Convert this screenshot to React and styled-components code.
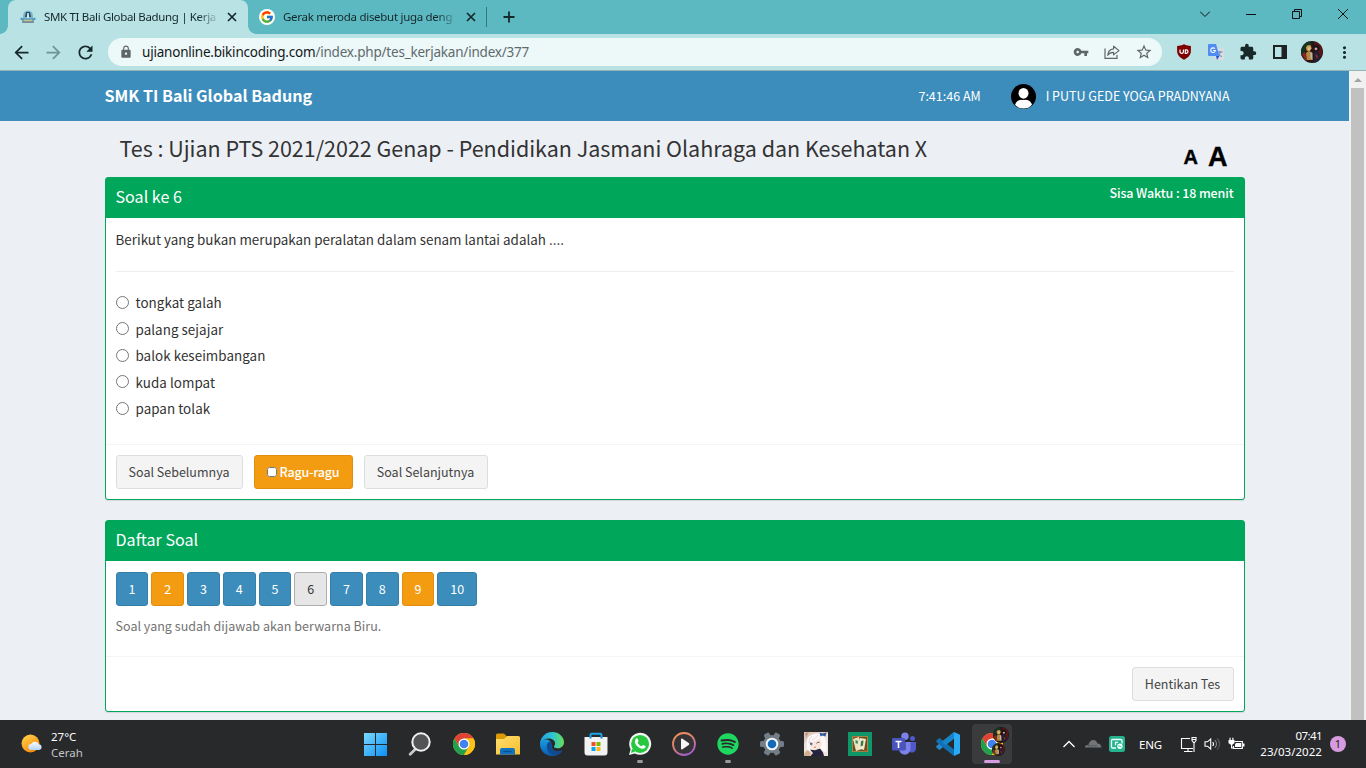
import React from 'react';
import styled, { createGlobalStyle, css } from 'styled-components';
import { MdVpnKey, MdStarBorder, MdExtension, MdMoreVert, MdArrowBack, MdArrowForward, MdRefresh, MdLock } from 'react-icons/md';
import { FcGoogle } from 'react-icons/fc';
import { FaSpotify } from 'react-icons/fa';

const ui = '"Noto Sans", "Open Sans", sans-serif';
const page = '"Noto Sans CJK SC", "Open Sans", sans-serif';

const GlobalStyle = createGlobalStyle`
  *, *::before, *::after { box-sizing: border-box; }
  body { margin: 0; overflow: hidden; }
  svg { display: block; flex: none; }
`;

const Screen = styled.div`
  width: 1366px;
  height: 768px;
  display: flex;
  flex-direction: column;
  overflow: hidden;
  font-family: ${ui};
`;

/* ---------- browser chrome ---------- */

const TabStrip = styled.div`
  height: 34px;
  flex: none;
  display: flex;
  align-items: stretch;
  padding-left: 8px;
  background: #5cb8c1;
`;

const Tab = styled.div`
  position: relative;
  width: ${p => p.$w}px;
  display: flex;
  align-items: center;
  padding-left: ${p => p.$pad}px;
  border-radius: 8px 8px 0 0;
  color: #15282b;
  background: ${p => (p.$active ? '#b9e2e5' : 'transparent')};
  ${p => p.$active && css`
    &::before, &::after {
      content: '';
      position: absolute;
      bottom: 0;
      width: 8px;
      height: 8px;
    }
    &::before { left: -8px; background: radial-gradient(circle at 0 0, transparent 7.5px, #b9e2e5 8px); }
    &::after { right: -8px; background: radial-gradient(circle at 100% 0, transparent 7.5px, #b9e2e5 8px); }
  `}
`;

const TabTitle = styled.span`
  width: 176px;
  margin: 0 7px 0 8px;
  white-space: nowrap;
  font-size: 11.5px;
  line-height: 18px;
  letter-spacing: ${p => p.$ls}px;
  mask-image: linear-gradient(90deg, #000 calc(100% - 22px), transparent);
`;

const TabDivider = styled.div`
  width: 1px;
  height: 20px;
  margin: 7px 16px 0 0;
  background: #35797f;
`;

const NewTab = styled.div`
  display: flex;
  align-items: center;
`;

const WindowButtons = styled.div`
  margin-left: auto;
  display: flex;
`;

const WindowButton = styled.div`
  width: 46px;
  height: 28px;
  display: flex;
  align-items: center;
  justify-content: center;
`;

const Toolbar = styled.div`
  height: 37px;
  flex: none;
  display: flex;
  align-items: center;
  padding: 0 6px 0 11px;
  background: #b9e2e5;
  border-bottom: 1px solid #93b5b8;
  color: #17282b;
`;

const NavButtons = styled.div`
  display: flex;
  gap: 11px;
  width: 97px;
`;

const AddressBar = styled.div`
  width: 1054px;
  height: 28px;
  border-radius: 14px;
  background: #edf8f9;
  display: flex;
  align-items: center;
  padding: 0 9px 0 11px;
  color: #5f6668;
`;

const Url = styled.span`
  margin-left: 9px;
  font-size: 13.5px;
  line-height: 20px;
  letter-spacing: -0.21px;
  color: #5f6a6c;
  white-space: nowrap;
  b { font-weight: 400; color: #14191a; }
`;

const AddressActions = styled.div`
  margin-left: auto;
  display: flex;
  align-items: center;
  gap: 15px;
`;

const Extensions = styled.div`
  margin-left: 6px;
  display: flex;
  align-items: center;
`;

const ExtensionSlot = styled.div`
  width: 32px;
  display: flex;
  justify-content: center;
`;

/* ---------- web page ---------- */

const Viewport = styled.div`
  height: 649px;
  flex: none;
  display: flex;
  background: #ecf0f5;
`;

const Document = styled.div`
  width: 1349px;
  font-family: ${page};
  color: #333;
`;

const Scrollbar = styled.div`
  width: 17px;
  background: #f1f1f1;
  display: flex;
  flex-direction: column;
  align-items: center;
`;

const ScrollArrow = styled.div`
  height: 17px;
  display: flex;
  align-items: center;
`;

const ScrollThumb = styled.div`
  width: 13px;
  flex: 1;
  background: #c1c1c1;
`;

const Navbar = styled.header`
  height: 50px;
  padding: 0 119.5px 0 104.5px;
  display: flex;
  align-items: center;
  background: #3c8dbc;
  color: #fff;
  white-space: nowrap;
`;

const Brand = styled.div`
  padding-bottom: 2px;
  font-size: 16.1px;
  font-weight: 700;
  line-height: 24px;
`;

const NavText = styled.span`
  font-size: 12.5px;
  line-height: 20px;
`;

const UserInfo = styled.div`
  margin-left: auto;
  display: flex;
  align-items: center;
  svg { margin: 0 10px 0 30px; }
`;

const Content = styled.main`
  width: 1140px;
  margin-left: 104.5px;
`;

const TitleRow = styled.div`
  height: 56px;
  display: flex;
  align-items: flex-start;
  justify-content: space-between;
  padding: 11px 17px 0 15px;
`;

const Title = styled.h1`
  margin: 0;
  font-size: 21.5px;
  font-weight: 400;
  line-height: 32px;
  letter-spacing: -0.02px;
  white-space: nowrap;
`;

const FontSizes = styled.div`
  display: flex;
  align-items: center;
  gap: 10px;
  padding-top: 10px;
  font-family: "Liberation Sans", sans-serif;
  font-weight: 700;
  color: #000;
  line-height: 30px;
`;

const SizeLetter = styled.span`
  font-size: ${p => p.$size}px;
  -webkit-text-stroke: 0.4px #000;
`;

const Box = styled.section`
  height: ${p => p.$h}px;
  margin-bottom: 20px;
  display: flex;
  flex-direction: column;
  background: #fff;
  border: 1px solid #00a65a;
  border-radius: 3px;
  box-shadow: 0 1px 1px rgba(0, 0, 0, 0.1);
`;

const BoxHeader = styled.div`
  height: 40px;
  flex: none;
  padding: 7px 10px;
  display: flex;
  justify-content: space-between;
  background: #00a65a;
  color: #fff;
`;

const BoxTitle = styled.h3`
  margin: 0;
  font-size: 16.1px;
  font-weight: 400;
  line-height: 22px;
`;

const TimeLeft = styled.div`
  font-size: 12.5px;
  font-weight: 500;
  line-height: 15px;
  letter-spacing: -0.12px;
`;

const BoxBody = styled.div`
  flex: 1;
  padding: 10px;
`;

const BoxFooter = styled.div`
  height: 55px;
  padding: 10px;
  border-top: 1px solid #f4f4f4;
  display: flex;
  gap: 11px;
  justify-content: ${p => (p.$end ? 'flex-end' : 'flex-start')};
`;

const Question = styled.p`
  margin: 0;
  padding-bottom: 21px;
  border-bottom: 1px solid #eee;
  font-size: 13.4px;
  line-height: 22px;
  letter-spacing: 0.01px;
`;

const Answers = styled.div`
  padding-top: 17px;
`;

const Answer = styled.label`
  height: 26.5px;
  display: flex;
  align-items: center;
  font-size: 13.4px;
  line-height: 22px;
  letter-spacing: 0.05px;
  input { width: 13px; height: 13px; margin: 0 7px 0 0; }
`;

const kinds = {
  plain: css`background: #f4f4f4; border-color: #ddd; color: #444;`,
  blue: css`background: #3c8dbc; border-color: #367fa9; color: #fff;`,
  orange: css`background: #f39c12; border-color: #e08e0b; color: #fff;`,
  current: css`background: #e6e6e6; border-color: #adadad; color: #333;`,
};

const Button = styled.button`
  width: ${p => p.$w}px;
  height: 34px;
  padding: 0;
  display: flex;
  align-items: center;
  justify-content: center;
  border: 1px solid;
  border-radius: 3px;
  font-family: ${page};
  font-size: 12.5px;
  font-weight: ${p => p.$weight || 400};
  line-height: 20px;
  letter-spacing: ${p => p.$ls || 0}px;
  white-space: nowrap;
  ${p => kinds[p.$kind]}
  input { width: 10px; height: 10px; margin: 0 3px 0 0; }
`;

const QuestionNumbers = styled.div`
  display: flex;
  gap: 3px;
  padding-top: 1px;
`;

const Hint = styled.p`
  margin: 10px 0 0;
  font-size: 12.5px;
  line-height: 20px;
  letter-spacing: 0.03px;
  color: #737373;
`;

/* ---------- taskbar ---------- */

const Taskbar = styled.footer`
  height: 48px;
  flex: none;
  display: flex;
  align-items: center;
  background: #28292b;
  color: #fff;
  font-size: 12px;
  line-height: 16px;
`;

const Weather = styled.div`
  width: 354px;
  display: flex;
  align-items: center;
  padding-left: 20px;
  gap: 8px;
`;

const WeatherText = styled.div`
  font-size: 11.5px;
  padding-top: 1px;
  span { display: block; }
  span + span { color: #c4c4c4; }
`;

const TaskButton = styled.div`
  position: relative;
  width: 40px;
  height: 40px;
  margin: 0 2px;
  display: flex;
  align-items: center;
  justify-content: center;
  border-radius: 4px;
  background: ${p => (p.$state === 'active' ? '#3a3b3d' : 'transparent')};
  ${p => p.$state && css`
    &::after {
      content: '';
      position: absolute;
      bottom: 1px;
      left: 50%;
      width: ${p.$state === 'active' ? 16 : 6}px;
      height: 3px;
      border-radius: 2px;
      transform: translateX(-50%);
      background: ${p.$state === 'active' ? '#d99be0' : '#9b9b9c'};
    }
  `}
`;

const Tray = styled.div`
  margin-left: auto;
  display: flex;
  align-items: center;
  padding-right: 20px;
`;

const TrayIcon = styled.div`
  margin-right: ${p => p.$gap}px;
`;

const Language = styled.span`
  margin: 1px 18px 0 0;
  font-size: 11.5px;
  letter-spacing: -0.15px;
`;

const Clock = styled.div`
  width: 64px;
  margin-left: 13px;
  text-align: right;
  font-size: 11.5px;
  white-space: nowrap;
  span { display: block; letter-spacing: -0.6px; }
  span + span { letter-spacing: 0.05px; }
`;

const Notice = styled.div`
  width: 16px;
  height: 16px;
  margin-left: 8px;
  border-radius: 50%;
  background: #d99be0;
  color: #222;
  font-size: 11px;
  text-align: center;
`;

/* ---------- drawings ---------- */

const CloseGlyph = () => (
  <svg width="10" height="10" viewBox="0 0 10 10" stroke="#15282b" strokeWidth="1.7">
    <path d="M1 1l8 8M9 1l-8 8" />
  </svg>
);

const SchoolLogo = () => (
  <svg width="16" height="16" viewBox="0 0 16 16">
    <path d="M3 7a5 5.500 0 0 1 10 0v3H3z" fill="#77b4cb" />
    <path d="M5 8l1-5h4l1 5z" fill="#284a63" />
    <path d="M7.200 4h1.600l.4 5H6.800z" fill="#dae5e6" />
    <path d="M.5 8.500l4 1h7l4-1V11H.5z" fill="#4f9fc0" />
    <path d="M2 11h12v3H2z" fill="#8297a1" />
    <path d="M4 11.200h8" stroke="#e3cf7d" />
    <path d="M2.500 13.500h11" stroke="#7a8c96" />
  </svg>
);

const GoogleBadge = styled.div`
  width: 16px;
  height: 16px;
  border-radius: 50%;
  background: #fff;
  display: flex;
  align-items: center;
  justify-content: center;
`;

const ShareGlyph = () => (
  <svg width="16" height="16" viewBox="0 0 16 16" fill="none" stroke="#5f6668" strokeWidth="1.2">
    <path d="M1 4.500v9.900h12V11" />
    <path d="M9.600 2.200L15 6.600l-5.400 4.300V8.400C7 8.300 5 9.200 3.700 11.300 4 7.700 6 5.200 9.600 4.800z" strokeLinejoin="round" />
  </svg>
);

const Shield = () => (
  <svg width="16" height="16" viewBox="0 0 16 16">
    <path d="M8 .3c2.300 1.300 4.500 1.700 6.900 1.700v5c0 4-3 6.800-6.900 8.700C4.100 13.800 1.100 11 1.100 7V2C3.500 2 5.700 1.600 8 .3z" fill="#800000" />
    <path d="M4 5.500v2.200a1.700 1.700 0 0 0 3.400 0V5.500M9.300 5.900h1a1.700 1.700 0 0 1 0 3.400h-1z" fill="none" stroke="#fff" strokeWidth="1.200" />
  </svg>
);

const Translate = () => (
  <svg width="16" height="16" viewBox="0 0 16 16">
    <rect x="7" y="4.500" width="9" height="11.500" rx="1" fill="#dadce0" />
    <path d="M9.500 8h5M12 7v1c0 2-1 3.500-2.500 4.500M10 9.500c.6 1.500 2.500 2.500 4 3" fill="none" stroke="#5e88ad" />
    <path d="M1 0h7l3.500 12H1a1 1 0 0 1-1-1V1a1 1 0 0 1 1-1z" fill="#4f8df5" />
    <path d="M8 12h3.500L9 16z" fill="#2a56c6" />
    <path d="M6.800 4.700A2.300 2.300 0 1 0 7.300 6.500H5.200" fill="none" stroke="#fff" strokeWidth="1.100" />
  </svg>
);

const SidePanel = () => (
  <svg width="14" height="14" viewBox="0 0 14 14">
    <path d="M0 0h14v14H0zM2 2v10h6.500V2z" fill="#202124" fillRule="evenodd" />
  </svg>
);

const PhotoArt = () => (
  <g>
    <rect width="22" height="22" fill="#261514" />
    <path d="M0 3l8-3 3 3-7 7-4 6z" fill="#173322" />
    <path d="M13 1l8 3v10l-5 6z" fill="#5b1714" />
    <path d="M5 6l2-2 3 .5.500 3-2 3-3-1z" fill="#c99c4a" />
    <circle cx="8.200" cy="7.500" r="1.500" fill="#e3b795" />
    <path d="M5 12l2.500-2 3 1 1 8H5.500z" fill="#b08a3d" />
    <path d="M9.500 11l2 1v7l-2-2z" fill="#c7b4a8" />
    <path d="M12.500 6l3-3 3 3v3l-3 2z" fill="#15131c" />
    <circle cx="15" cy="7.800" r="1.400" fill="#d9a58f" />
    <path d="M13 11l3-1 3 3-1 9h-5z" fill="#212035" />
    <path d="M14 13l3 2-1 3z" fill="#a32a29" />
    <path d="M1 13l3-2 2 7-1 3z" fill="#8c2822" />
  </g>
);

const ProfilePhoto = ({ size }) => {
  const id = React.useId();
  return (
    <svg width={size} height={size} viewBox="0 0 22 22">
      <clipPath id={id}><circle cx="11" cy="11" r="11" /></clipPath>
      <g clipPath={`url(#${id})`}><PhotoArt /></g>
    </svg>
  );
};

const UserAvatar = () => (
  <svg width="25" height="25" viewBox="0 0 25 25">
    <clipPath id="avatar"><circle cx="12.500" cy="12.500" r="12" /></clipPath>
    <circle cx="12.500" cy="12.500" r="12.500" fill="#000" />
    <g fill="#fff" clipPath="url(#avatar)">
      <ellipse cx="12.500" cy="9.300" rx="5" ry="5.400" />
      <path d="M4 21c1-4 4-5.500 8.500-5.500S20 17 21 21l-4 4H8z" />
    </g>
    <path d="M7.500 12.500c1 4 9 4 10 0" fill="none" stroke="#000" strokeWidth="1" />
  </svg>
);

const SunCloud = () => (
  <svg width="23" height="20" viewBox="0 0 23 20">
    <defs>
      <linearGradient id="sun" x1="0" y1="0" x2=".6" y2="1"><stop stopColor="#ffd84f" /><stop offset="1" stopColor="#f58a0c" /></linearGradient>
      <linearGradient id="cloud" x2="0" y2="1"><stop stopColor="#fafdff" /><stop offset="1" stopColor="#b6d4f3" /></linearGradient>
    </defs>
    <circle cx="10.500" cy="9.500" r="9" fill="url(#sun)" />
    <path d="M11.500 16a3 3 0 0 1-.3-6 4.300 4.300 0 0 1 7.800.3 2.900 2.900 0 0 1 .4 5.700z" fill="url(#cloud)" />
  </svg>
);

const Windows = () => (
  <svg width="24" height="24" viewBox="0 0 24 24">
    <defs><linearGradient id="win" x2="1" y2="1"><stop stopColor="#7bd9fc" /><stop offset="1" stopColor="#0b90f5" /></linearGradient></defs>
    <path d="M0 1h11v11H0zM12 1h11v11H12zM0 13h11v11H0zM12 13h11v11H12z" fill="url(#win)" />
  </svg>
);

const Search = () => (
  <svg width="24" height="24" viewBox="0 0 24 24">
    <path d="M8 16.500L2.200 22.300" stroke="#c9cacb" strokeWidth="2.800" strokeLinecap="round" />
    <circle cx="13" cy="10" r="8.700" fill="#525456" stroke="#f1f1f1" strokeWidth="2" />
  </svg>
);

const Chrome = () => (
  <svg width="22" height="22" viewBox="0 0 24 24">
    <circle cx="12" cy="12" r="12" fill="#fbc116" />
    <path d="M12 6h10.400A12 12 0 0 0 1.600 6L6.800 15z" fill="#df4338" />
    <path d="M1.600 6A12 12 0 0 0 12 24l5.200-9H6.800z" fill="#21a14e" />
    <path d="M12 24a12 12 0 0 0 10.400-18H12l5.200 9z" fill="#fbc116" />
    <circle cx="12" cy="12" r="6" fill="#fff" />
    <circle cx="12" cy="12" r="4.700" fill="#3f83ee" />
  </svg>
);

const Folder = () => (
  <svg width="24" height="24" viewBox="0 0 24 24">
    <defs><linearGradient id="folder" x2="1" y2="1"><stop stopColor="#ffdf70" /><stop offset="1" stopColor="#f7bd2c" /></linearGradient></defs>
    <path d="M0 3a1.500 1.500 0 0 1 1.500-1.500H8L10.500 4v4H0z" fill="#dc9906" />
    <path d="M0 7h8l3-3h11.500A1.500 1.500 0 0 1 24 5.500V22.500H0z" fill="url(#folder)" />
    <path d="M4 22.500V18a2 2 0 0 1 2-2h11a2 2 0 0 1 2 2v4.500z" fill="#1272c2" />
    <path d="M7.500 19.500h8" stroke="#0a4f8d" strokeWidth="1.300" />
  </svg>
);

const Edge = () => (
  <svg width="24" height="24" viewBox="0 0 24 24">
    <defs>
      <linearGradient id="edgeTop" x1="0" y1=".4" x2="1" y2=".4"><stop stopColor="#219ee0" /><stop offset=".5" stopColor="#2cc3d5" /><stop offset="1" stopColor="#68df55" /></linearGradient>
      <linearGradient id="edgeLow" x2="0" y2="1"><stop stopColor="#1a9de2" /><stop offset="1" stopColor="#0a5bad" /></linearGradient>
    </defs>
    <path d="M0 12c0 7 5.500 12 12 12 4.500 0 8-2 10.300-5.500-6 3-11-.5-10.800-5.500C11.500 9 8 7 5 7.500 2 8 0 10 0 12z" fill="url(#edgeLow)" />
    <path d="M8.700 9.500c-4 4-1.500 13.500 6.300 14.200 3.500-.8 6-2.500 7.500-5-6 2-11.500-.5-10.800-5.200.3-1.500-.7-3.500-3-4z" fill="#104b91" />
    <path d="M0 12C.5 4.500 6 0 12.200 0 19 0 24 5 24 10c0 4-3 6.300-6.300 6.300-2.700 0-4-1-3.700-2 .7-.9 1.200-2 1.200-3C14.500 5.500 4 4 0 12z" fill="url(#edgeTop)" />
  </svg>
);

const Store = () => (
  <svg width="24" height="24" viewBox="0 0 24 24">
    <path d="M6.500 7V3a1.300 1.300 0 0 1 1.300-1.300h8.400A1.300 1.300 0 0 1 17.500 3v4" fill="none" stroke="#1ba6e8" strokeWidth="2" />
    <path d="M.5 5h23v15.500a3 3 0 0 1-3 3h-17a3 3 0 0 1-3-3z" fill="#f2f2f2" />
    <path d="M6.500 5v1.500M17.500 5v1.500" stroke="#1683c4" strokeWidth="2" />
    <path d="M7.500 10h4v4h-4z" fill="#ee5126" /><path d="M12.500 10h4v4h-4z" fill="#7eb900" />
    <path d="M7.500 15h4v4h-4z" fill="#05a6f0" /><path d="M12.500 15h4v4h-4z" fill="#fdb813" />
  </svg>
);

const WhatsApp = () => (
  <svg width="24" height="24" viewBox="0 0 24 24">
    <path d="M1 23l1.600-5.800A11 11 0 1 1 6.800 21.400z" fill="#f5f7f5" />
    <circle cx="12.100" cy="11.900" r="9" fill="#27c840" />
    <path d="M3 21l1.200-4.500 3 3z" fill="#27c840" />
    <path d="M8.200 6.500c.5-.4 1.200-.3 1.400.2l.9 2c.2.500-.7 1.300-.9 1.700.8 1.900 2.100 3.100 4 3.900.5-.3 1.200-1.500 1.700-1.300l2.100 1c.5.300.2 1.300-.2 1.800-.9 1-2.400 1.300-4.200.7-3.500-1.200-5.300-3.500-6-5.800-.4-1.500.1-3.100 1.200-4.200z" fill="#fff" />
  </svg>
);

const MediaPlayer = () => (
  <svg width="24" height="24" viewBox="0 0 24 24">
    <defs><linearGradient id="media" x2=".6" y2="1"><stop stopColor="#f7954c" /><stop offset=".5" stopColor="#df8175" /><stop offset="1" stopColor="#a45fc6" /></linearGradient></defs>
    <circle cx="12" cy="12" r="11" fill="#343437" stroke="url(#media)" strokeWidth="1.800" />
    <path d="M9 7.500c0-1 .7-1.300 1.500-.8l6.200 4.300c.8.600.8 1.300 0 1.900l-6.200 4.400c-.8.500-1.500.2-1.500-.8z" fill="#f6f6f6" />
  </svg>
);

const Gear = () => (
  <svg width="24" height="24" viewBox="0 0 24 24">
    <g fill="#727d87">
      <circle cx="12" cy="12" r="9" />
      {[0, 60, 120].map(a => <rect key={a} x="0" y="9" width="24" height="6" rx="1.500" transform={`rotate(${a} 12 12)`} />)}
    </g>
    <circle cx="12" cy="12" r="6.300" fill="#f1f5f8" />
    <circle cx="12" cy="12" r="4.300" fill="#1269b7" />
  </svg>
);

const Paimon = () => (
  <svg width="24" height="24" viewBox="0 0 24 24">
    <rect width="24" height="24" fill="#eee4de" />
    <path d="M0 0h24v2L16 0 5 4 0 12z" fill="#dccabd" />
    <path d="M3 9c1-8 13-10 18-3 2 5 2 11 1 15l-5-4-9 1-5 3z" fill="#fbf8f7" />
    <path d="M5 10c3 1 9-2 11-4l2 6c-1 4-4 6-7 6s-5-3-6-8z" fill="#f9e5da" />
    <path d="M6 10.500l2.500.5-.5 2.500-2-1z" fill="#5a68a8" />
    <path d="M12.500 11.300c1-1 2-1.200 3-.9" stroke="#544b5c" fill="none" />
    <path d="M8 4c-2 2-3 4-3 7M14 3c-1 2-3 4-6 5" stroke="#d5cdd3" fill="none" strokeWidth=".7" />
    <path d="M15.500.5l3 1 4-1-1 4-3-1-2 1z" fill="#30569d" />
    <path d="M6 17.500l5 .8 5-1.800 3 4 1 3.500H6.500L9 21z" fill="#26233d" />
    <path d="M2 19l2-1 3 3-1 3H0v-2z" fill="#d4ae8d" />
    <path d="M1 1l4-1-3 6z" fill="#c49a81" />
    <path d="M10 15.500l2-.5" stroke="#cd7c70" />
  </svg>
);

const Solitaire = () => (
  <svg width="24" height="24" viewBox="0 0 24 24">
    <rect width="24" height="24" fill="#109768" />
    <rect x="4" y="4" width="16" height="16" fill="#a58444" />
    <path d="M5 5h14v14H5z" fill="#6b4f29" />
    <path d="M5 7l6-2 3 12-6 2z" fill="#e9e5c4" /><path d="M12 6l6 1-2 11-6-2z" fill="#f2e9c9" />
    <path d="M7.500 8l2.500 1-.5 3-2-1z" fill="#3b8c5d" /><path d="M13 9l2.500-.5-.5 5-2.500 1z" fill="#397955" />
    <path d="M5 5h4M16 19h3" stroke="#c65a38" />
  </svg>
);

const Teams = () => (
  <svg width="24" height="24" viewBox="0 0 24 24">
    <circle cx="20.500" cy="6.500" r="2.500" fill="#5059c9" />
    <circle cx="13" cy="4.300" r="3.700" fill="#7b83eb" />
    <path d="M16 10h8v6.500a4 4 0 0 1-6 3.500z" fill="#5059c9" />
    <path d="M7 10h11.500v7a5.700 5.700 0 0 1-11.500 0z" fill="#7b83eb" />
    <path d="M7 10h7v8H7.200z" fill="#5159b4" />
    <rect y="6" width="13" height="12.500" rx="1.200" fill="#4b53bc" />
    <path d="M3.500 9.500h6M6.500 9.500v6.500" stroke="#fff" strokeWidth="1.600" />
  </svg>
);

const VsCode = () => (
  <svg width="24" height="24" viewBox="0 0 24 24">
    <path d="M18 0v6.500L3.500 18 .3 15.400V14z" fill="#2489ca" />
    <path d="M18 24v-6.500L3.500 6 .3 8.600V10z" fill="#1070b3" />
    <path d="M18 0l6 2.800v18.400L18 24z" fill="#2aaaf2" />
    <path d="M18 0v6.500L9.500 13 6 10.500z" fill="#1685cb" />
  </svg>
);

const ChromeProfile = styled.div`
  position: relative;
  svg:nth-child(2) { position: absolute; left: 12px; top: -6px; }
  svg:nth-child(3) { position: absolute; left: 11px; top: 10px; }
`;

const CloudFlare = () => (
  <svg width="17" height="10" viewBox="0 0 17 10">
    <path d="M0 8.500c0-2 1.500-2.700 3.300-2.300C4 3 6 1 8.500 1c2 0 3.500 1.500 3.800 3.500C14.500 4 16.300 6 16.400 8.500z" fill="#727679" />
    <path d="M3 6.800h9" stroke="#55585a" fill="none" />
  </svg>
);

const TrayApp = () => (
  <svg width="16" height="16" viewBox="0 0 16 16">
    <rect width="16" height="16" rx="2.500" fill="#27b28f" />
    <path d="M13 7.500V4.500a1 1 0 0 0-1-1H3.500a1 1 0 0 0-1 1v6.500a1 1 0 0 0 1 1H7M9 6.300H6.500v3" fill="none" stroke="#effffa" strokeWidth="1.300" />
    <circle cx="10.900" cy="10.300" r="2.700" fill="#f2fffb" /><path d="M9 9.700l3.500 1" stroke="#27b28f" strokeWidth=".8" />
  </svg>
);

const Network = () => (
  <svg width="17" height="17" viewBox="0 0 17 17" fill="none" stroke="#fff" strokeWidth="1.100">
    <path d="M10 2.500H1.500v10H13M4 15.500h8.500M8 12.500v3M14 7v9M12 1.500h4v3L14.500 6.500h-1L12 4.500zM12 3.500h4" />
  </svg>
);

const Volume = () => (
  <svg width="17" height="14" viewBox="0 0 17 14" fill="none" stroke="#fff" strokeWidth="1.100">
    <path d="M1 4.800h2.500L6.700 2v10L3.500 9.200H1z" /><path d="M8.700 5c1 1.200 1 2.800 0 4" /><path d="M10.800 3.200c2.300 2 2.300 5.600 0 7.600" stroke="#8d8e8f" /><path d="M13 1.500c3.500 3 3.500 8 0 11" stroke="#595a5b" />
  </svg>
);

const Battery = () => (
  <svg width="17" height="14" viewBox="0 0 17 14">
    <path d="M6.500 4.500h7.800v7H5.500V9" fill="none" stroke="#fff" strokeWidth="1.200" />
    <path d="M8 6h5v4H7V7.500zM15 6.500h1.500v3H15z" fill="#fff" />
    <path d="M.5 3h6v3L4.800 7.500H2.200L.5 6zM1.500.8h1.200v2.500H1.500zM4.300.8h1.200v2.500H4.300zM3 7h1.200v3.500h2v1H3z" fill="#fff" />
  </svg>
);

const taskbarApps = [
  { icon: <Windows /> },
  { icon: <Search /> },
  { icon: <Chrome /> },
  { icon: <Folder /> },
  { icon: <Edge /> },
  { icon: <Store /> },
  { icon: <WhatsApp />, state: 'open' },
  { icon: <MediaPlayer /> },
  { icon: <FaSpotify size={22} color="#1fd660" />, state: 'open' },
  { icon: <Gear /> },
  { icon: <Paimon /> },
  { icon: <Solitaire /> },
  { icon: <Teams /> },
  { icon: <VsCode /> },
  { icon: <ChromeProfile><Chrome /><ProfilePhoto size={16} /><ProfilePhoto size={13} /></ChromeProfile>, state: 'active' },
];

const extensions = [
  <Shield />, <Translate />, <MdExtension size={18} />, <SidePanel />, <ProfilePhoto size={22} />, <MdMoreVert size={19} />,
];

const answers = ['tongkat galah', 'palang sejajar', 'balok keseimbangan', 'kuda lompat', 'papan tolak'];

const numbers = [
  ['1', 'blue'], ['2', 'orange'], ['3', 'blue'], ['4', 'blue'], ['5', 'blue'],
  ['6', 'current'], ['7', 'blue'], ['8', 'blue'], ['9', 'orange'], ['10', 'blue'],
];

function BrowserChrome() {
  return (
    <>
      <TabStrip>
        <Tab $active $w={240} $pad={12}>
          <SchoolLogo />
          <TabTitle $ls={-0.34}>SMK TI Bali Global Badung | Kerja</TabTitle>
          <CloseGlyph />
        </Tab>
        <Tab $w={238} $pad={11}>
          <GoogleBadge><FcGoogle size={14} /></GoogleBadge>
          <TabTitle $ls={-0.29}>Gerak meroda disebut juga deng</TabTitle>
          <CloseGlyph />
        </Tab>
        <TabDivider />
        <NewTab>
          <svg width="12" height="12" viewBox="0 0 12 12" stroke="#15282b" strokeWidth="1.800"><path d="M6 .5v11M.5 6h11" /></svg>
        </NewTab>
        <WindowButtons>
          <WindowButton><svg width="10" height="6" viewBox="0 0 10 6" fill="none" stroke="#111"><path d="M0 .5l5 5 5-5" /></svg></WindowButton>
          <WindowButton><svg width="10" height="1" viewBox="0 0 10 1"><path d="M0 0h10v1H0z" fill="#111" /></svg></WindowButton>
          <WindowButton><svg width="10" height="10" viewBox="0 0 10 10" fill="none" stroke="#111"><path d="M.5 2.500h7v7h-7zM2.500 2.500v-2h7v7h-2" /></svg></WindowButton>
          <WindowButton><svg width="10" height="10" viewBox="0 0 10 10" stroke="#111"><path d="M0 0l10 10M10 0L0 10" /></svg></WindowButton>
        </WindowButtons>
      </TabStrip>
      <Toolbar>
        <NavButtons>
          <MdArrowBack size={21} />
          <MdArrowForward size={21} color="#6f9497" />
          <MdRefresh size={21} />
        </NavButtons>
        <AddressBar>
          <MdLock size={14} />
          <Url><b>ujianonline.bikincoding.com</b>/index.php/tes_kerjakan/index/377</Url>
          <AddressActions>
            <MdVpnKey size={16} />
            <ShareGlyph />
            <MdStarBorder size={18} />
          </AddressActions>
        </AddressBar>
        <Extensions>
          {extensions.map((icon, i) => <ExtensionSlot key={i}>{icon}</ExtensionSlot>)}
        </Extensions>
      </Toolbar>
    </>
  );
}

function ExamPage() {
  return (
    <Document>
      <Navbar>
        <Brand>SMK TI Bali Global Badung</Brand>
        <UserInfo>
          <NavText>7:41:46 AM</NavText>
          <UserAvatar />
          <NavText>I PUTU GEDE YOGA PRADNYANA</NavText>
        </UserInfo>
      </Navbar>
      <Content>
        <TitleRow>
          <Title>Tes : Ujian PTS 2021/2022 Genap - Pendidikan Jasmani Olahraga dan Kesehatan X</Title>
          <FontSizes>
            <SizeLetter $size={20}>A</SizeLetter>
            <SizeLetter $size={27}>A</SizeLetter>
          </FontSizes>
        </TitleRow>
        <Box $h={323}>
          <BoxHeader>
            <BoxTitle>Soal ke 6</BoxTitle>
            <TimeLeft>Sisa Waktu : 18 menit</TimeLeft>
          </BoxHeader>
          <BoxBody>
            <Question>Berikut yang bukan merupakan peralatan dalam senam lantai adalah ....</Question>
            <Answers>
              {answers.map(a => (
                <Answer key={a}><input type="radio" name="answer" />{a}</Answer>
              ))}
            </Answers>
          </BoxBody>
          <BoxFooter>
            <Button $kind="plain" $w={127}>Soal Sebelumnya</Button>
            <Button $kind="orange" $w={99} $weight={500} $ls={-0.2}><input type="checkbox" />Ragu-ragu</Button>
            <Button $kind="plain" $w={124}>Soal Selanjutnya</Button>
          </BoxFooter>
        </Box>
        <Box $h={192}>
          <BoxHeader>
            <BoxTitle>Daftar Soal</BoxTitle>
          </BoxHeader>
          <BoxBody>
            <QuestionNumbers>
              {numbers.map(([n, kind]) => (
                <Button key={n} $kind={kind} $w={n.length > 1 ? 39.5 : 32.78}>{n}</Button>
              ))}
            </QuestionNumbers>
            <Hint>Soal yang sudah dijawab akan berwarna Biru.</Hint>
          </BoxBody>
          <BoxFooter $end>
            <Button $kind="plain" $w={102}>Hentikan Tes</Button>
          </BoxFooter>
        </Box>
      </Content>
    </Document>
  );
}

export default function App() {
  return (
    <Screen>
      <GlobalStyle />
      <BrowserChrome />
      <Viewport>
        <ExamPage />
        <Scrollbar>
          <ScrollArrow><svg width="8" height="4" viewBox="0 0 8 4"><path d="M4 0l4 4H0z" fill="#a3a3a3" /></svg></ScrollArrow>
          <ScrollThumb />
        </Scrollbar>
      </Viewport>
      <Taskbar>
        <Weather>
          <SunCloud />
          <WeatherText><span>27°C</span><span>Cerah</span></WeatherText>
        </Weather>
        {taskbarApps.map((app, i) => (
          <TaskButton key={i} $state={app.state}>{app.icon}</TaskButton>
        ))}
        <Tray>
          <TrayIcon $gap={10}>
            <svg width="12" height="8" viewBox="0 0 12 8" fill="none" stroke="#fff" strokeWidth="1.300"><path d="M.5 7L6 1.500 11.500 7" /></svg>
          </TrayIcon>
          <TrayIcon $gap={7}><CloudFlare /></TrayIcon>
          <TrayIcon $gap={14}><TrayApp /></TrayIcon>
          <Language>ENG</Language>
          <TrayIcon $gap={7}><Network /></TrayIcon>
          <TrayIcon $gap={7}><Volume /></TrayIcon>
          <Battery />
          <Clock><span>07:41</span><span>23/03/2022</span></Clock>
          <Notice>1</Notice>
        </Tray>
      </Taskbar>
    </Screen>
  );
}
